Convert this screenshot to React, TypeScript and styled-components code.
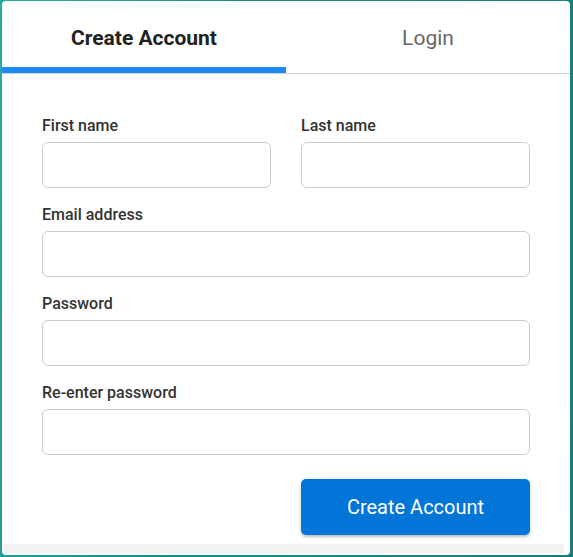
import { useState } from "react";
import styled, { createGlobalStyle } from "styled-components";

const GlobalStyle = createGlobalStyle`
  html, body {
    margin: 0;
    height: 100%;
  }
  body {
    font-family: Roboto, "Liberation Sans", Arial, sans-serif;
    background: linear-gradient(100deg, #2aa9a2 0%, #188a84 40%, #167f79 100%);
  }
`;

const Page = styled.div`
  padding: 1px 3px 2px 2px;
  box-sizing: border-box;
  height: 557px;
`;

const Card = styled.div`
  background: #fff;
  border-radius: 4px;
  height: 554px;
  width: 568px;
  display: flex;
  flex-direction: column;
  overflow: hidden;
`;

const Tabs = styled.div`
  display: flex;
  border-bottom: 1px solid #cfcfcf;
`;

const Tab = styled.button<{ $active: boolean }>`
  flex: 1;
  border: none;
  background: none;
  padding: 25px 0 17px;
  line-height: 24px;
  font-family: Roboto, "Liberation Sans", Arial, sans-serif;
  font-size: 21px;
  font-weight: ${(p) => (p.$active ? 700 : 400)};
  color: ${(p) => (p.$active ? "#222" : "#666")};
  border-bottom: 6px solid ${(p) => (p.$active ? "#1e88f5" : "transparent")};
  cursor: pointer;
`;

const Form = styled.form`
  flex: 1;
  padding: 43px 40px 0;
  display: flex;
  flex-direction: column;
  gap: 18px;
`;

const Row = styled.div`
  display: grid;
  grid-template-columns: 1fr 1fr;
  column-gap: 30px;
`;

const Field = styled.label`
  display: flex;
  flex-direction: column;
`;

const Label = styled.span`
  font-size: 16px;
  line-height: 18px;
  font-weight: 500;
  color: #333;
  margin-bottom: 7px;
`;

const Input = styled.input`
  height: 46px;
  box-sizing: border-box;
  border: 1px solid #cccccc;
  border-radius: 6px;
  padding: 0 12px;
  font-size: 16px;
  font-family: inherit;
  outline: none;
`;

const Actions = styled.div`
  display: flex;
  justify-content: flex-end;
  margin-top: 6px;
`;

const Submit = styled.button`
  width: 229px;
  height: 56px;
  border: none;
  border-radius: 5px;
  background: #0275d8;
  color: #fff;
  font-family: Roboto, "Liberation Sans", Arial, sans-serif;
  font-size: 20px;
  box-shadow: 0 2px 3px rgba(0, 0, 0, 0.25);
  cursor: pointer;
`;

const ScrollTrack = styled.div`
  height: 9px;
  margin: 0 6px 2px 1px;
  background: #f3f3f3;
`;

function App() {
  const [tab, setTab] = useState<"create" | "login">("create");

  return (
    <>
      <GlobalStyle />
      <Page>
        <Card>
          <Tabs>
            <Tab $active={tab === "create"} onClick={() => setTab("create")}>
              Create Account
            </Tab>
            <Tab $active={tab === "login"} onClick={() => setTab("login")}>
              Login
            </Tab>
          </Tabs>
          <Form onSubmit={(e) => e.preventDefault()}>
            <Row>
              <Field>
                <Label>First name</Label>
                <Input type="text" />
              </Field>
              <Field>
                <Label>Last name</Label>
                <Input type="text" />
              </Field>
            </Row>
            <Field>
              <Label>Email address</Label>
              <Input type="email" />
            </Field>
            <Field>
              <Label>Password</Label>
              <Input type="password" />
            </Field>
            <Field>
              <Label>Re-enter password</Label>
              <Input type="password" />
            </Field>
            <Actions>
              <Submit type="submit">Create Account</Submit>
            </Actions>
          </Form>
          <ScrollTrack />
        </Card>
      </Page>
    </>
  );
}

export default App;
